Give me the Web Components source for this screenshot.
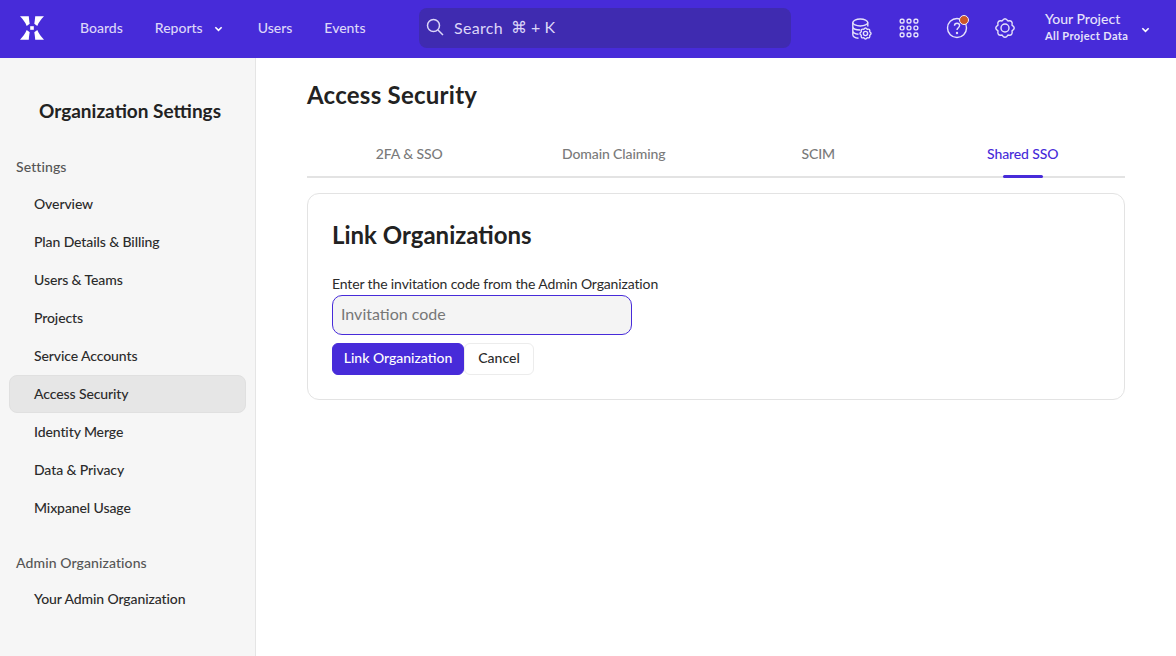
<!DOCTYPE html>
<html>
<head>
<meta charset="utf-8">
<title>Access Security</title>
<style>
html, body { margin: 0; height: 100%; overflow: hidden; }
body { font-family: Lato, "Liberation Sans", sans-serif; color: #222; background: #fff; }
</style>
</head>
<body>
<app-shell>
  <top-nav slot="nav"></top-nav>
  <settings-sidebar slot="side"></settings-sidebar>
  <access-page slot="main"></access-page>
</app-shell>
<script>
// 8 lobe gear outline, centred on 12,12
const gearPath = 'M19.020 9.090Q23.500 12 19.020 14.910Q20.130 20.130 14.910 19.020Q12 23.500 9.090 19.020Q3.870 20.130 4.980 14.910Q.5 12 4.980 9.090Q3.870 3.870 9.090 4.980Q12 .5 14.910 4.980Q20.130 3.870 19.020 9.090z';

class AppShell extends HTMLElement {
  constructor() {
    super();
    this.attachShadow({mode: 'open'});
    this.shadowRoot.innerHTML = `
      <style>
        :host { display: grid; grid-template-columns: 256px 1fr; grid-template-rows: 58px 1fr; height: 656px; width: 1176px; }
        .nav { grid-column: 1 / 3; display: block; }
      </style>
      <div class="nav"><slot name="nav"></slot></div>
      <slot name="side"></slot>
      <slot name="main"></slot>
    `;
  }
}
customElements.define('app-shell', AppShell);

class TopNav extends HTMLElement {
  constructor() {
    super();
    this.attachShadow({mode: 'open'});
    const arm = 'M0 .3H8.800C9 3.200 9.300 5.500 9.700 7.700L6.700 9.900C5.300 6.500 3 3.300 0 .3z';
    this.shadowRoot.innerHTML = `
      <style>
        :host { display: flex; align-items: center; height: 58px; background: #472bd9; color: #dcd6f8; font-size: 14px; font-weight: 500; box-sizing: border-box; padding: 0 0 2px 20px; }
        svg { display: block; fill: none; stroke: currentColor; }
        .logo { width: 24px; height: 24px; stroke: none; fill: #fff; margin-right: 36px; }
        .links { display: flex; width: 339px; gap: 32px; align-items: center; padding-bottom: 2px; }
        .links span { display: flex; align-items: center; }
        .chev { width: 9px; height: 6px; stroke-width: 1.8; margin: 3px 3px 0 11px; color: #fff; }
        .search { display: flex; align-items: center; width: 372px; height: 40px; border-radius: 8px; background: #3f2bb0; box-sizing: border-box; padding: 0 0 2px 7px; font-size: 16px; font-weight: 400; letter-spacing: .3px; }
        .search svg { width: 18px; height: 18px; stroke-width: 1.5; margin-right: 10px; }
        .search b { font-weight: 400; margin-left: 8px; letter-spacing: 0; }
        .icons { display: flex; align-items: center; gap: 24px; margin-left: 58px; color: #e6e2fb; }
        .icons svg { width: 24px; height: 24px; stroke-width: 1.4; }
        .help { position: relative; }
        .dot { position: absolute; top: -1.500px; left: 13.500px; width: 8px; height: 8px; border-radius: 50%; background: #cc5529; border: 1.500px solid #f1eefe; }
        .proj { margin-left: 28px; line-height: 16px; color: #e6e2fb; font-size: 14px; }
        .proj small { display: block; font-size: 11px; font-weight: 700; line-height: 18px; letter-spacing: .4px; }
        .pchev { margin-left: 13px; }
      </style>
      <svg class="logo" viewBox="0 0 24 24">
        <path d="${arm}"/>
        <path d="${arm}" transform="matrix(-1 0 0 1 24 0)"/>
        <path d="${arm}" transform="matrix(1 0 0 -1 0 24)"/>
        <path d="${arm}" transform="matrix(-1 0 0 -1 24 24)"/>
        <rect x="10.200" y="10.200" width="3.600" height="3.600"/>
      </svg>
      <div class="links">
        <span>Boards</span>
        <span>Reports<svg class="chev" viewBox="0 0 10 6"><path d="M1.500 1l3.500 3.500L8.500 1"/></svg></span>
        <span>Users</span>
        <span>Events</span>
      </div>
      <div class="search">
        <svg viewBox="0 0 18 18"><circle cx="7.500" cy="7.500" r="6"/><path d="M12 12l5 5"/></svg>
        Search<b>⌘ + K</b>
      </div>
      <div class="icons">
        <svg viewBox="0 0 24 24">
          <ellipse cx="11.300" cy="6.500" rx="7.500" ry="3.500"/>
          <path d="M3.800 6.500V18.500C3.800 20.500 6.500 22 9.500 22.200M18.800 6.500V10.500M3.800 10.500C3.800 12.500 7 14 11.300 14M3.800 14.500C3.800 16.500 6.500 18 9.500 18.200"/>
          <g transform="translate(16.500 17.500) scale(.6) translate(-12 -12)" style="stroke-width:2.300" stroke-linejoin="round"><path d="${gearPath}"/><circle cx="12" cy="12" r="3.500"/></g>
        </svg>
        <svg viewBox="0 0 24 24"><rect x="3.200" y="3.200" width="3.800" height="3.800" rx="1.300"/><rect x="10.100" y="3.200" width="3.800" height="3.800" rx="1.300"/><rect x="17" y="3.200" width="3.800" height="3.800" rx="1.300"/><rect x="3.200" y="10.100" width="3.800" height="3.800" rx="1.300"/><rect x="10.100" y="10.100" width="3.800" height="3.800" rx="1.300"/><rect x="17" y="10.100" width="3.800" height="3.800" rx="1.300"/><rect x="3.200" y="17" width="3.800" height="3.800" rx="1.300"/><rect x="10.100" y="17" width="3.800" height="3.800" rx="1.300"/><rect x="17" y="17" width="3.800" height="3.800" rx="1.300"/></svg>
        <div class="help">
          <svg viewBox="0 0 24 24"><circle cx="12" cy="12" r="9.500"/><path d="M9.500 9.800c0-1.500 1.100-2.500 2.600-2.500s2.500 1 2.500 2.300c0 2.200-2.600 2-2.600 4.400"/><circle cx="12" cy="17" r=".5"/></svg>
          <div class="dot"></div>
        </div>
        <svg viewBox="0 0 24 24"><path d="${gearPath}" stroke-linejoin="round"/><circle cx="12" cy="12" r="4"/></svg>
      </div>
      <div class="proj">Your Project<small>All Project Data</small></div>
      <svg class="chev pchev" viewBox="0 0 10 6"><path d="M1.500 1l3.500 3.500L8.500 1"/></svg>
    `;
  }
}
customElements.define('top-nav', TopNav);

class SideItem extends HTMLElement {
  constructor() {
    super();
    this.attachShadow({mode: 'open'});
    this.shadowRoot.innerHTML = `
      <style>
        :host { display: flex; align-items: center; height: 38px; box-sizing: border-box; margin: 0 9px; padding: 0 0 2px 24px; border-radius: 8px; border: 1px solid transparent; font-size: 14px; font-weight: 500; color: #2b2b2b; letter-spacing: -.1px; }
        :host([active]) { background: #e6e6e6; border-color: #e0e0e0; }
      </style>
      <slot></slot>
    `;
  }
}
customElements.define('side-item', SideItem);

class SettingsSidebar extends HTMLElement {
  constructor() {
    super();
    this.attachShadow({mode: 'open'});
    this.shadowRoot.innerHTML = `
      <style>
        :host { display: block; background: #f6f6f6; border-right: 1px solid #e5e5e5; box-sizing: border-box; height: 598px; }
        h2 { margin: 0; padding: 41px 0 0 5px; height: 59px; box-sizing: content-box; text-align: center; font-size: 19px; line-height: 24px; font-weight: 700; color: #222; }
        h3 { margin: 0; padding-left: 16px; font-size: 14px; font-weight: 500; color: #555; line-height: 18px; letter-spacing: .1px; }
        .first { margin-bottom: 9px; }
        .second { margin-top: 27px; margin-bottom: 9px; }
      </style>
      <h2>Organization Settings</h2>
      <h3 class="first">Settings</h3>
      <side-item>Overview</side-item>
      <side-item>Plan Details &amp; Billing</side-item>
      <side-item>Users &amp; Teams</side-item>
      <side-item>Projects</side-item>
      <side-item>Service Accounts</side-item>
      <side-item active>Access Security</side-item>
      <side-item>Identity Merge</side-item>
      <side-item>Data &amp; Privacy</side-item>
      <side-item>Mixpanel Usage</side-item>
      <h3 class="second">Admin Organizations</h3>
      <side-item style="height:36px">Your Admin Organization</side-item>
    `;
  }
}
customElements.define('settings-sidebar', SettingsSidebar);

class TabBar extends HTMLElement {
  constructor() {
    super();
    this.attachShadow({mode: 'open'});
    this.shadowRoot.innerHTML = `
      <style>
        :host { display: grid; grid-template-columns: repeat(4, 1fr); height: 40px; border-bottom: 2px solid #e3e3e3; font-size: 14px; font-weight: 500; color: #7a7a7a; text-align: center; letter-spacing: -.1px; }
        div { position: relative; line-height: 36px; }
        .on { color: #472bd9; }
        .on::after { content: ""; position: absolute; left: 50%; margin-left: -20px; bottom: -2px; width: 40px; height: 3px; border-radius: 2px; background: #472bd9; }
      </style>
      <div>2FA &amp; SSO</div>
      <div>Domain Claiming</div>
      <div>SCIM</div>
      <div class="on">Shared SSO</div>
    `;
  }
}
customElements.define('tab-bar', TabBar);

class LinkCard extends HTMLElement {
  constructor() {
    super();
    this.attachShadow({mode: 'open'});
    this.shadowRoot.innerHTML = `
      <style>
        :host { display: block; border: 1px solid #e3e3e3; border-radius: 12px; box-sizing: border-box; height: 207px; padding: 25px 24px; margin-top: 15px; }
        h2 { margin: 0 0 24px; font-size: 24px; line-height: 32px; font-weight: 700; color: #222; }
        label { display: block; font-size: 14px; line-height: 18px; color: #2b2b2b; letter-spacing: -.13px; }
        .input { width: 300px; height: 40px; box-sizing: border-box; border: 1px solid #472bd9; border-radius: 10px; background: #f4f4f4; margin-top: 2px; padding-left: 8px; font-size: 16px; line-height: 36px; color: #777; }
        .btns { display: flex; margin-top: 8px; font-size: 14px; font-weight: 500; }
        .btns div { height: 32px; line-height: 28px; box-sizing: border-box; border-radius: 6px; border: 1px solid #ececec; text-align: center; }
        .primary { width: 132px; background: #472bd9; border-color: #472bd9 !important; color: #fff; }
        .cancel { width: 70px; color: #2b2b2b; }
      </style>
      <h2>Link Organizations</h2>
      <label>Enter the invitation code from the Admin Organization</label>
      <div class="input">Invitation code</div>
      <div class="btns"><div class="primary">Link Organization</div><div class="cancel">Cancel</div></div>
    `;
  }
}
customElements.define('link-card', LinkCard);

class AccessPage extends HTMLElement {
  constructor() {
    super();
    this.attachShadow({mode: 'open'});
    this.shadowRoot.innerHTML = `
      <style>
        :host { display: block; padding: 19px 51px 0; }
        h1 { margin: 0 0 23px; font-size: 24px; line-height: 36px; font-weight: 700; color: #222; letter-spacing: .25px; }
      </style>
      <h1>Access Security</h1>
      <tab-bar></tab-bar>
      <link-card></link-card>
    `;
  }
}
customElements.define('access-page', AccessPage);
</script>
</body>
</html>
